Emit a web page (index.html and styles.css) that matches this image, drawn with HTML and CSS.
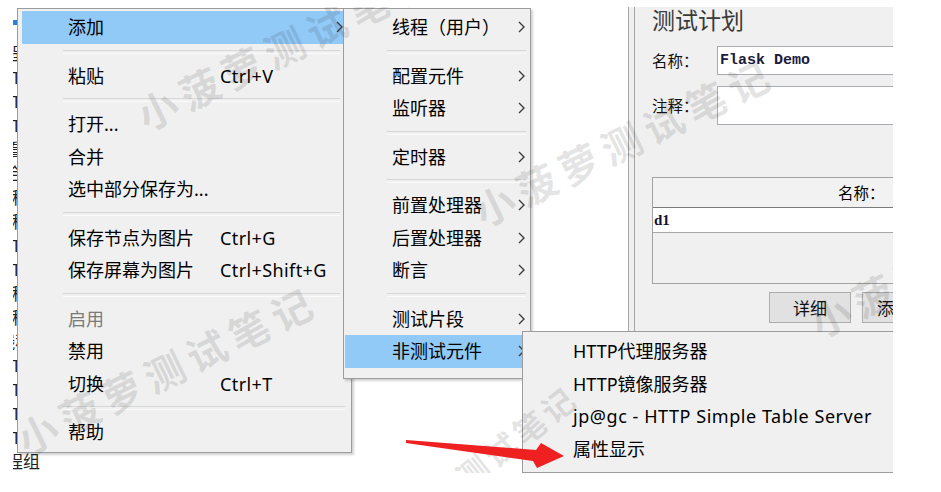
FILE: index.html
```html
<!DOCTYPE html>
<html lang="zh-CN">
<head>
<meta charset="utf-8">
<title>JMeter 右键菜单</title>
<link rel="stylesheet" href="styles.css">
</head>
<body>
<div class="shot">
  <div class="tree">
    <div class="tree-item sel"><span class="ti-icon"></span>测试计划</div>
    <div class="tree-item">线程组</div>
    <div class="tree-item">HTTP请求</div>
    <div class="tree-item">HTTP请求</div>
    <div class="tree-item">HTTP请求</div>
    <div class="tree-item">察看结果树</div>
    <div class="tree-item">聚合报告</div>
    <div class="tree-item">]线程组</div>
    <div class="tree-item">]线程组</div>
    <div class="tree-item">HTTP请求</div>
    <div class="tree-item">HTTP请求</div>
    <div class="tree-item">-线程组</div>
    <div class="tree-item">-线程组</div>
    <div class="tree-item">|线程组</div>
    <div class="tree-item">HTTP请求</div>
    <div class="tree-item">HTTP请求</div>
    <div class="tree-item">HTTP请求</div>
    <div class="tree-item">HTTP请求</div>
    <div class="tree-item">线程组</div>
  </div>
  <div class="splitter"></div>
  <div class="editor">
    <div class="title">测试计划</div>
    <div class="field-row name-row">
      <span class="label">名称：</span>
      <div class="input">Flask Demo</div>
    </div>
    <div class="field-row note-row">
      <span class="label">注释：</span>
      <div class="input tall"></div>
    </div>
    <div class="table">
      <div class="thead"><span>名称：</span></div>
      <div class="trow">d1</div>
      <div class="tempty"></div>
    </div>
    <div class="buttons">
      <div class="btn">详细</div>
      <div class="btn btn2">添加</div>
    </div>
  </div>

  <div class="menu menu-main">
    <div class="mi hl"><span class="mt">添加</span><span class="ms"></span><svg class="chev" viewBox="0 0 7 12"><polyline points="1,1 6,6 1,11"/></svg></div>
    <div class="sep"></div>
    <div class="mi"><span class="mt">粘贴</span><span class="ms">Ctrl+V</span></div>
    <div class="sep"></div>
    <div class="mi"><span class="mt">打开...</span></div>
    <div class="mi"><span class="mt">合并</span></div>
    <div class="mi"><span class="mt">选中部分保存为...</span></div>
    <div class="sep"></div>
    <div class="mi"><span class="mt">保存节点为图片</span><span class="ms">Ctrl+G</span></div>
    <div class="mi"><span class="mt">保存屏幕为图片</span><span class="ms">Ctrl+Shift+G</span></div>
    <div class="sep"></div>
    <div class="mi disabled"><span class="mt">启用</span></div>
    <div class="mi"><span class="mt">禁用</span></div>
    <div class="mi"><span class="mt">切换</span><span class="ms">Ctrl+T</span></div>
    <div class="sep sep-long"></div>
    <div class="mi"><span class="mt">帮助</span></div>
  </div>

  <div class="menu menu-add">
    <div class="mi"><span class="mt">线程（用户）</span><svg class="chev" viewBox="0 0 7 12"><polyline points="1,1 6,6 1,11"/></svg></div>
    <div class="sep"></div>
    <div class="mi"><span class="mt">配置元件</span><svg class="chev" viewBox="0 0 7 12"><polyline points="1,1 6,6 1,11"/></svg></div>
    <div class="mi"><span class="mt">监听器</span><svg class="chev" viewBox="0 0 7 12"><polyline points="1,1 6,6 1,11"/></svg></div>
    <div class="sep"></div>
    <div class="mi"><span class="mt">定时器</span><svg class="chev" viewBox="0 0 7 12"><polyline points="1,1 6,6 1,11"/></svg></div>
    <div class="sep"></div>
    <div class="mi"><span class="mt">前置处理器</span><svg class="chev" viewBox="0 0 7 12"><polyline points="1,1 6,6 1,11"/></svg></div>
    <div class="mi"><span class="mt">后置处理器</span><svg class="chev" viewBox="0 0 7 12"><polyline points="1,1 6,6 1,11"/></svg></div>
    <div class="mi"><span class="mt">断言</span><svg class="chev" viewBox="0 0 7 12"><polyline points="1,1 6,6 1,11"/></svg></div>
    <div class="sep"></div>
    <div class="mi"><span class="mt">测试片段</span><svg class="chev" viewBox="0 0 7 12"><polyline points="1,1 6,6 1,11"/></svg></div>
    <div class="mi hl"><span class="mt">非测试元件</span><svg class="chev" viewBox="0 0 7 12"><polyline points="1,1 6,6 1,11"/></svg></div>
  </div>

  <div class="menu menu-nontest">
    <div class="mi"><span class="mt">HTTP代理服务器</span></div>
    <div class="mi"><span class="mt">HTTP镜像服务器</span></div>
    <div class="mi"><span class="mt latin">jp@gc - HTTP Simple Table Server</span></div>
    <div class="mi"><span class="mt">属性显示</span></div>
  </div>

  <div class="wm wm1">小菠萝测试笔记</div>
  <div class="wm wm2">小菠萝测试笔记</div>
  <div class="wm wm3">小菠萝测试笔记</div>
  <div class="wm wm4">小菠萝测试笔记</div>
  <div class="wm wm5">小菠萝测试笔记</div>

  <svg class="arrow" width="880" height="466" viewBox="0 0 880 466">
    <polygon points="393,433 523,443 528,436 551,449 524,461 520,454 393,436"/>
  </svg>
</div>
</body>
</html>
```

FILE: styles.css
```css
* { box-sizing: border-box; }

html, body {
  margin: 0;
  padding: 0;
  background: #ffffff;
}

.shot {
  position: relative;
  margin: 7px 0 0 13px;
  width: 880px;
  height: 466px;
  overflow: hidden;
  display: flex;
  background: #ffffff;
  font-family: "Noto Sans", "Noto Sans CJK SC", sans-serif;
}

/* ---------- tree pane ---------- */
.tree {
  width: 615px;
  flex: none;
  background: #ffffff;
  padding-top: 11px;
  display: flex;
  flex-direction: column;
}

.tree-item {
  height: 24px;
  display: flex;
  align-items: center;
  margin-left: -24px;
  font-size: 17px;
  line-height: 1;
  color: #222;
  white-space: nowrap;
}

.tree-item.sel .ti-icon {
  display: inline-block;
  width: 6px;
  height: 5px;
  margin: -14px 0 0 22px;
  background: #2f7fd8;
}

.splitter {
  width: 7px;
  flex: none;
  background: #f0f0f0;
  border-left: 1px solid #a6a6a6;
  border-right: 1px solid #a6a6a6;
}

/* ---------- editor pane ---------- */
.editor {
  flex: 1;
  min-width: 0;
  background: #f0f0f0;
  padding-left: 17px;
  display: flex;
  flex-direction: column;
  font-family: "Noto Sans CJK SC", sans-serif;
  color: #000;
}

.title {
  height: 24px;
  font-size: 23px;
  line-height: 24px;
  color: #3a3a3a;
  white-space: nowrap;
}

.field-row {
  display: flex;
  align-items: center;
}

.name-row { margin-top: 15px; }
.note-row { margin-top: 11px; }

.label {
  width: 65px;
  flex: none;
  font-size: 15.5px;
  line-height: 1;
  color: #111;
}

.input {
  flex: none;
  width: 260px;
  height: 29px;
  background: #ffffff;
  border: 1px solid #a9abb0;
  padding-left: 2px;
  display: flex;
  align-items: center;
  font-family: "Liberation Mono", monospace;
  font-weight: bold;
  font-size: 15px;
  color: #1b1b3b;
  white-space: nowrap;
}

.input.tall { height: 39px; }

.table {
  margin-top: 52px;
  width: 260px;
  height: 107px;
  border: 1px solid #a3a3a3;
  background: #f0f0f0;
  display: flex;
  flex-direction: column;
  flex: none;
}

.thead {
  height: 30px;
  flex: none;
  background: #f2f2f2;
  border-bottom: 1px solid #7c7c7c;
  padding-left: 185px;
  display: flex;
  align-items: center;
  font-size: 15.5px;
  line-height: 1;
  white-space: nowrap;
}

.trow {
  height: 25px;
  flex: none;
  background: #ffffff;
  border-bottom: 1px solid #a8a8a8;
  padding-left: 1px;
  display: flex;
  align-items: center;
  font-family: "Liberation Serif", serif;
  font-weight: bold;
  font-size: 15px;
  color: #111133;
}

.tempty { flex: 1; }

.buttons {
  margin-top: 8px;
  padding-left: 117px;
  display: flex;
  gap: 11px;
}

.btn {
  flex: none;
  width: 82px;
  height: 31px;
  background: #e1e1e1;
  border: 1px solid #adadad;
  display: flex;
  align-items: center;
  justify-content: center;
  font-size: 17px;
  line-height: 1;
  color: #111;
}

.btn2 {
  justify-content: flex-start;
  padding-left: 14px;
}

/* ---------- context menus ---------- */
.menu {
  position: absolute;
  background: #f0f0f0;
  border: 1px solid #9c9c9c;
  box-shadow: 2px 2px 2px rgba(0, 0, 0, 0.18);
  font-family: "Noto Sans", "Noto Sans CJK SC", sans-serif;
  font-size: 18px;
  color: #000;
  display: flex;
  flex-direction: column;
}

.menu-main {
  left: 4px;
  top: 1px;
  width: 335px;
  height: 445px;
  padding: 2px 5px 3px 4px;
  z-index: 1;
}

.menu-add {
  left: 330px;
  top: 1px;
  width: 188px;
  height: 371px;
  padding: 2px 2px 3px 1px;
  z-index: 2;
}

.menu-nontest {
  left: 509px;
  top: 324px;
  width: 420px;
  height: 142px;
  padding: 3px 2px 6px 2px;
  z-index: 3;
}

.mi {
  height: 32.5px;
  flex: none;
  display: flex;
  align-items: center;
  white-space: nowrap;
}

.mi .mt { line-height: 1; }
.mi .ms { line-height: 1; letter-spacing: 0.4px; }
.mi .latin { letter-spacing: 0.55px; }

.menu-main .mi { padding-left: 46px; }
.menu-main .mi .mt { width: 152px; flex: none; }
.menu-main .mi .ms { flex: 1; }
.menu-main .chev { margin-right: 3px; }

.menu-add .mi { padding-left: 47px; }
.menu-add .mi .mt { flex: 1; }
.menu-add .chev { margin-right: 3px; }

.menu-nontest .mi { padding-left: 48px; }

.mi.hl { background: #91c9f7; }
.mi.disabled { color: #7a7a7a; }

.chev {
  width: 7px;
  height: 12px;
  flex: none;
  fill: none;
  stroke: #3c3c3c;
  stroke-width: 1.4;
}

.sep {
  height: 16px;
  flex: none;
  display: flex;
  align-items: center;
}

.sep::before {
  content: "";
  flex: 1;
  height: 2px;
  border-top: 1px solid #d7d7d7;
  border-bottom: 1px solid #fbfbfb;
}

.menu-main .sep { padding: 0 6px 0 41px; }
.menu-main .sep-long { padding-right: 1px; }
.menu-add .sep { padding: 0 2px 0 42px; }

/* ---------- watermark ---------- */
.wm {
  position: absolute;
  z-index: 5;
  font-family: "Noto Sans CJK SC", sans-serif;
  font-weight: bold;
  font-size: 40px;
  line-height: 40px;
  letter-spacing: 7px;
  color: rgba(40, 40, 40, 0.12);
  white-space: nowrap;
  transform-origin: 0 50%;
  transform: rotate(-26deg);
  pointer-events: none;
}

.wm1 { left: 126px; top: 90px; }
.wm2 { left: 6px; top: 414px; }
.wm3 { left: 463px; top: 186px; }
.wm4 { left: 799px; top: 297px; }
.wm5 {
  left: 361px;
  top: 524px;
  font-size: 32px;
  line-height: 32px;
  letter-spacing: 4px;
  transform: rotate(-38deg);
}

/* ---------- red annotation arrow ---------- */
.arrow {
  position: absolute;
  left: 0;
  top: 0;
  z-index: 6;
  pointer-events: none;
}

.arrow polygon { fill: #ef2020; }
```
